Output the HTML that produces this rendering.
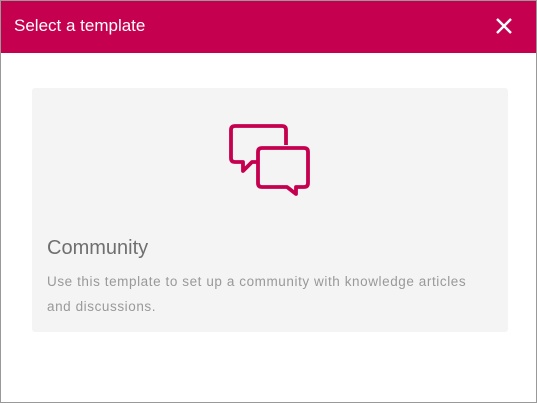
<!DOCTYPE html><html><head><style>
body{margin:0;width:537px;height:403px;overflow:hidden;font-family:"Liberation Sans",sans-serif;background:#fff}
.f{position:absolute;left:0;top:0;width:535px;height:401px;border:1px solid #999;}
.h{position:absolute;left:0;top:0;width:535px;height:52px;background:#c5004f;color:#fff;font-size:17px;}
.h span{position:absolute;left:13px;top:15px}
.card{position:absolute;left:31px;top:87px;width:476px;height:244px;background:#f4f4f4;border-radius:3px}
.t{position:absolute;left:15px;top:149px;font-size:20px;color:#6f6f6f}
.d{position:absolute;left:15px;top:181px;font-size:13.5px;color:#999;line-height:25px;width:432px;letter-spacing:0.58px}
</style></head><body><div class="f">
<div class="h"><span>Select a template</span>
<svg style="position:absolute;left:494px;top:16px" width="18" height="18"><path d="M2 2L16 16M16 2L2 16" stroke="#fff" stroke-width="2.4"/></svg></div>
<div class="card">
<svg style="position:absolute;left:0;top:0" width="476" height="244" viewBox="32 88 476 244"><g fill="none" stroke="#c5004f" stroke-width="3.8" stroke-linejoin="round">
<path d="M286 145V130Q286 126 282 126H235Q231 126 231 130V158Q231 162 235 162H243V171L252 162H258"/>
<path d="M262 148H304Q308 148 308 152V183Q308 187 304 187H296L296 194L287 187H262Q258 187 258 183V152Q258 148 262 148Z"/>
</g></svg>
<div class="t">Community</div>
<div class="d">Use this template to set up a community with knowledge articles and discussions.</div>
</div></div></body></html>
